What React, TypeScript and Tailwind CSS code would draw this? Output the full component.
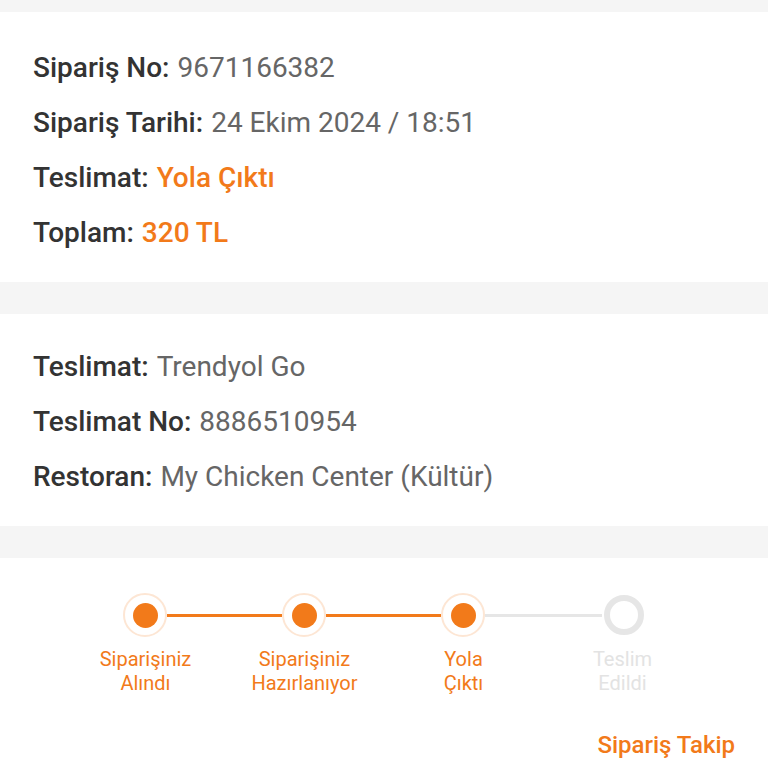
import React from "react";

const orange = "text-[#f27a1a]";

const Row = ({ label, value, accent }: { label: string; value: string; accent?: boolean }) => (
  <div className="h-[55px] flex items-center text-[28px]">
    <span className="font-medium text-[#333333]">{label}:</span>
    <span className={accent ? `ml-[8px] font-medium ${orange}` : "ml-[8px] text-[#666666]"}>{value}</span>
  </div>
);

const steps = [
  { a: "Siparişiniz", b: "Alındı", done: true },
  { a: "Siparişiniz", b: "Hazırlanıyor", done: true },
  { a: "Yola", b: "Çıktı", done: true },
  { a: "Teslim", b: "Edildi", done: false },
];

const Dot = ({ done }: { done: boolean }) =>
  done ? (
    <div className="w-[44px] h-[44px] shrink-0 rounded-full border-2 border-[#fde6d4] bg-white flex items-center justify-center">
      <div className="w-[25px] h-[25px] rounded-full bg-[#f27a1a]" />
    </div>
  ) : (
    <div className="w-[44px] h-[44px] shrink-0 flex items-center justify-center">
      <div className="w-[40px] h-[40px] rounded-full border-[6px] border-[#e6e6e6] bg-white" />
    </div>
  );

export default function App() {
  return (
    <div className="w-[768px] h-[768px] bg-[#f5f5f5] font-['Roboto',sans-serif] overflow-hidden">
      <div className="h-[12px]" />
      <section className="bg-white pl-[33px] pt-[28px] pb-[24px] h-[270px]">
        <Row label="Sipariş No" value="9671166382" />
        <Row label="Sipariş Tarihi" value="24 Ekim 2024 / 18:51" />
        <Row label="Teslimat" value="Yola Çıktı" accent />
        <Row label="Toplam" value="320 TL" accent />
      </section>
      <div className="h-[32px]" />
      <section className="bg-white pl-[33px] pt-[25px] h-[212px]">
        <Row label="Teslimat" value="Trendyol Go" />
        <Row label="Teslimat No" value="8886510954" />
        <Row label="Restoran" value="My Chicken Center (Kültür)" />
      </section>
      <div className="h-[32px]" />
      <section className="bg-white h-[210px] pt-[35px]">
        <div className="flex items-center pl-[123px]">
          {steps.map((s, i) => (
            <React.Fragment key={i}>
              <Dot done={s.done} />
              {i < steps.length - 1 && (
                <div
                  className={
                    steps[i + 1].done
                      ? "w-[115px] h-[3px] bg-[#f27a1a]"
                      : "w-[117px] h-[3px] bg-[#e6e6e6]"
                  }
                />
              )}
            </React.Fragment>
          ))}
        </div>
        <div className="flex pl-[66px] mt-[10px]">
          {steps.map((s, i) => (
            <div
              key={i}
              className={`w-[159px] text-center text-[20px] leading-[24px] ${s.done ? orange : "text-[#e3e3e3]"}`}
            >
              <div>{s.a}</div>
              <div>{s.b}</div>
            </div>
          ))}
        </div>
        <div className="flex justify-end pr-[33px] mt-[32px]">
          <span className={`text-[24px] font-medium ${orange}`}>Sipariş Takip</span>
        </div>
      </section>
    </div>
  );
}
